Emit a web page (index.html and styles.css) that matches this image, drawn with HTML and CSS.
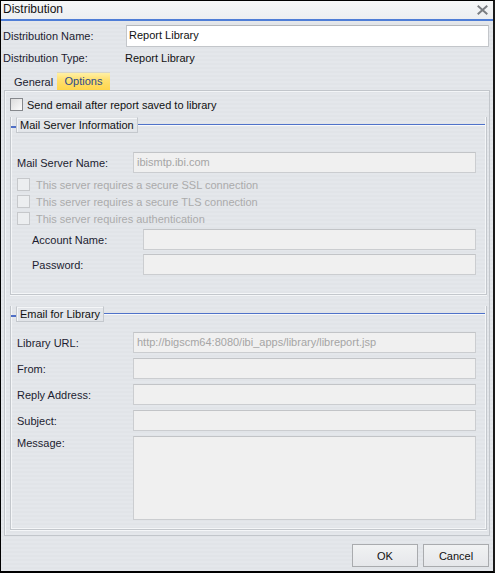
FILE: index.html
```html
<!DOCTYPE html>
<html>
<head>
<meta charset="utf-8">
<title>Distribution</title>
<link rel="stylesheet" href="styles.css">
</head>
<body>
<div class="window">
  <div class="titlebar">
    <span class="title">Distribution</span>
    <svg class="close" width="11" height="10" viewBox="0 0 11 10"><path d="M1.5 1.5 L9.5 8.5 M9.5 1.5 L1.5 8.5" stroke="#7a7d82" stroke-width="2" stroke-linecap="square"/></svg>
  </div>
  <div class="content">
    <div class="top-row name-row">
      <span class="top-label">Distribution Name:</span>
      <div class="name-input">Report Library</div>
    </div>
    <div class="top-row type-row">
      <span class="top-label">Distribution Type:</span>
      <span class="type-value">Report Library</span>
    </div>
    <div class="tabs">
      <span class="tab">General</span>
      <span class="tab active">Options</span>
    </div>
    <div class="panel">
      <div class="send-row"><span class="cb cb-on"></span><span>Send email after report saved to library</span></div>

      <div class="group g1">
        <div class="legend"><span class="dash"></span><span class="legend-box">Mail Server Information</span><span class="rule"></span></div>
        <div class="group-body">
          <div class="field server-field"><span class="flabel">Mail Server Name:</span><div class="finput">ibismtp.ibi.com</div></div>
          <div class="dis-checks">
            <div class="dis-check"><span class="cb cb-dis"></span><span>This server requires a secure SSL connection</span></div>
            <div class="dis-check"><span class="cb cb-dis"></span><span>This server requires a secure TLS connection</span></div>
            <div class="dis-check"><span class="cb cb-dis"></span><span>This server requires authentication</span></div>
          </div>
          <div class="auth">
            <div class="field"><span class="flabel alabel">Account Name:</span><div class="finput"></div></div>
            <div class="field"><span class="flabel alabel">Password:</span><div class="finput"></div></div>
          </div>
        </div>
      </div>

      <div class="group g2">
        <div class="legend"><span class="dash"></span><span class="legend-box">Email for Library</span><span class="rule"></span></div>
        <div class="group-body g2-body">
          <div class="field"><span class="flabel">Library URL:</span><div class="finput">http://bigscm64:8080/ibi_apps/library/libreport.jsp</div></div>
          <div class="field"><span class="flabel">From:</span><div class="finput"></div></div>
          <div class="field"><span class="flabel">Reply Address:</span><div class="finput"></div></div>
          <div class="field"><span class="flabel">Subject:</span><div class="finput"></div></div>
          <div class="field msg-field"><span class="flabel">Message:</span><div class="finput textarea"></div></div>
        </div>
      </div>
    </div>
    <div class="buttons">
      <span class="btn">OK</span>
      <span class="btn">Cancel</span>
    </div>
  </div>
</div>
</body>
</html>
```

FILE: styles.css
```css
* { box-sizing: border-box; }
html, body { margin: 0; padding: 0; }
body {
  font-family: "Liberation Sans", Arial, sans-serif;
  font-size: 11px;
  color: #1c1c30;
  background: #fff;
}
.window {
  width: 495px;
  height: 573px;
  border-top: 1px solid #000;
  border-left: 1px solid #000;
  border-right: 2px solid #1a1a1a;
  border-bottom: 2px solid #000;
  background: repeating-linear-gradient(to bottom, #e4e7eb 0, #e4e7eb 2px, #e1e4e8 2px, #e1e4e8 4px);
  display: flex;
  flex-direction: column;
}
.titlebar {
  height: 20px;
  background: linear-gradient(to bottom, #f6f7f8, #eceef1);
  border-bottom: 2px solid #4e7dd6;
  display: flex;
  align-items: center;
  justify-content: space-between;
  padding: 0 5px 2px 2px;
}
.title {
  font-size: 12px;
  color: #111;
}
.close { display: block; margin-top: 2px; }
.content {
  flex: 1;
  display: flex;
  flex-direction: column;
  padding: 0 2px 0 2px;
}
.top-row {
  display: flex;
  align-items: center;
}
.name-row { margin-top: 4px; height: 22px; }
.type-row { height: 22px; }
.top-label { width: 123px; flex: none; }
.name-input {
  width: 363px;
  height: 22px;
  background: #fff;
  border: 1px solid #c3c6ca;
  border-top-color: #b5b8bc;
  padding: 3px 2px 0 2px;
  color: #111;
}
.type-value { margin-left: -1px; color: #111; }
.tabs {
  height: 21px;
  display: flex;
  align-items: flex-end;
}
.tab {
  height: 18px;
  display: flex;
  align-items: center;
  padding: 2px 0 0 0;
}
.tab:first-child { margin-left: 11px; width: 43px; padding-left: 0; }
.tab.active {
  width: 53px;
  margin-left: 0;
  justify-content: center;
  padding-top: 0;
  padding-bottom: 2px;
  background: linear-gradient(to bottom, #fff0a6 0, #ffe070 40%, #ffd64c 100%);
  border-top: 1px solid #d8d6c8;
  color: #2d4b8c;
}
.panel {
  height: 446px;
  margin-left: 1px;
  margin-right: 1px;
  border: 1px solid #c2c6cb;
  box-shadow: inset 1px 1px 0 #f3f5f7;
  display: flex;
  flex-direction: column;
}
.send-row {
  margin-top: 7px;
  margin-left: 5px;
  height: 13px;
  display: flex;
  align-items: center;
  gap: 4px;
  color: #111;
}
.cb {
  width: 13px;
  height: 13px;
  flex: none;
  display: inline-block;
}
.cb-on {
  border: 1px solid #85888c;
  background: linear-gradient(135deg, #dcdcdc, #fbfbfb);
}
.cb-dis {
  border: 1px solid #c6c8cb;
  background: #eceef0;
}
.group {
  margin-left: 5px;
  margin-right: 2px;
  border-left: 1px solid #c3c7cc;
  border-right: 1px solid #c3c7cc;
  border-bottom: 1px solid #c3c7cc;
  box-shadow: inset 1px 0 0 #f4f6f8, inset -1px -1px 0 #f4f6f8, 0 1px 0 #f4f6f8;
}
.g1 { margin-top: 6px; }
.g2 { margin-top: 11px; }
.legend {
  height: 16px;
  display: flex;
  align-items: center;
}
.dash {
  width: 5px;
  height: 2px;
  margin-top: 3px;
  background: #4f6fc6;
  flex: none;
}
.legend-box {
  height: 16px;
  display: flex;
  align-items: center;
  padding: 0 3px 0 3px;
  border: 1px solid #c4c8cd;
  border-top-color: #dfe2e6;
  box-shadow: inset 1px 1px 0 #f4f6f8;
  color: #111;
  font-size: 11px;
  flex: none;
}
.rule {
  flex: 1;
  height: 2px;
  margin-top: -1px;
  border-top: 1px solid #4f72c9;
  border-bottom: 1px solid #f7f9fb;
  margin-right: 1px;
}
.group-body {
  padding: 19px 10px 19px 6px;
  display: flex;
  flex-direction: column;
}
.field {
  display: flex;
  align-items: center;
  height: 21px;
}
.flabel {
  width: 116px;
  flex: none;
}
.finput {
  flex: 1;
  height: 21px;
  background: #f0f0f0;
  border: 1px solid #cbcdd0;
  border-top-color: #c2c4c7;
  color: #a5a5a5;
  padding: 3px 3px 0 3px;
  white-space: nowrap;
  overflow: hidden;
}
.dis-checks {
  margin-top: 3px;
  display: flex;
  flex-direction: column;
}
.dis-check {
  height: 17px;
  display: flex;
  align-items: center;
  gap: 6px;
  color: #ababab;
}
.auth {
  margin-top: 2px;
  padding-left: 15px;
  display: flex;
  flex-direction: column;
  gap: 4px;
}
.alabel { width: 111px; }
.g2-body {
  padding-top: 10px;
  padding-bottom: 9px;
  gap: 5px;
}
.msg-field {
  height: 84px;
  align-items: flex-start;
}
.msg-field .flabel { padding-top: 1px; }
.textarea { height: 84px; }
.buttons {
  margin-top: 8px;
  display: flex;
  justify-content: flex-end;
  gap: 5px;
  padding-right: 2px;
}
.btn {
  width: 66px;
  height: 23px;
  display: flex;
  align-items: center;
  justify-content: center;
  border: 1px solid #a9abae;
  background: linear-gradient(to bottom, #f1f2f3, #e5e7ea);
  color: #111;
}
```
